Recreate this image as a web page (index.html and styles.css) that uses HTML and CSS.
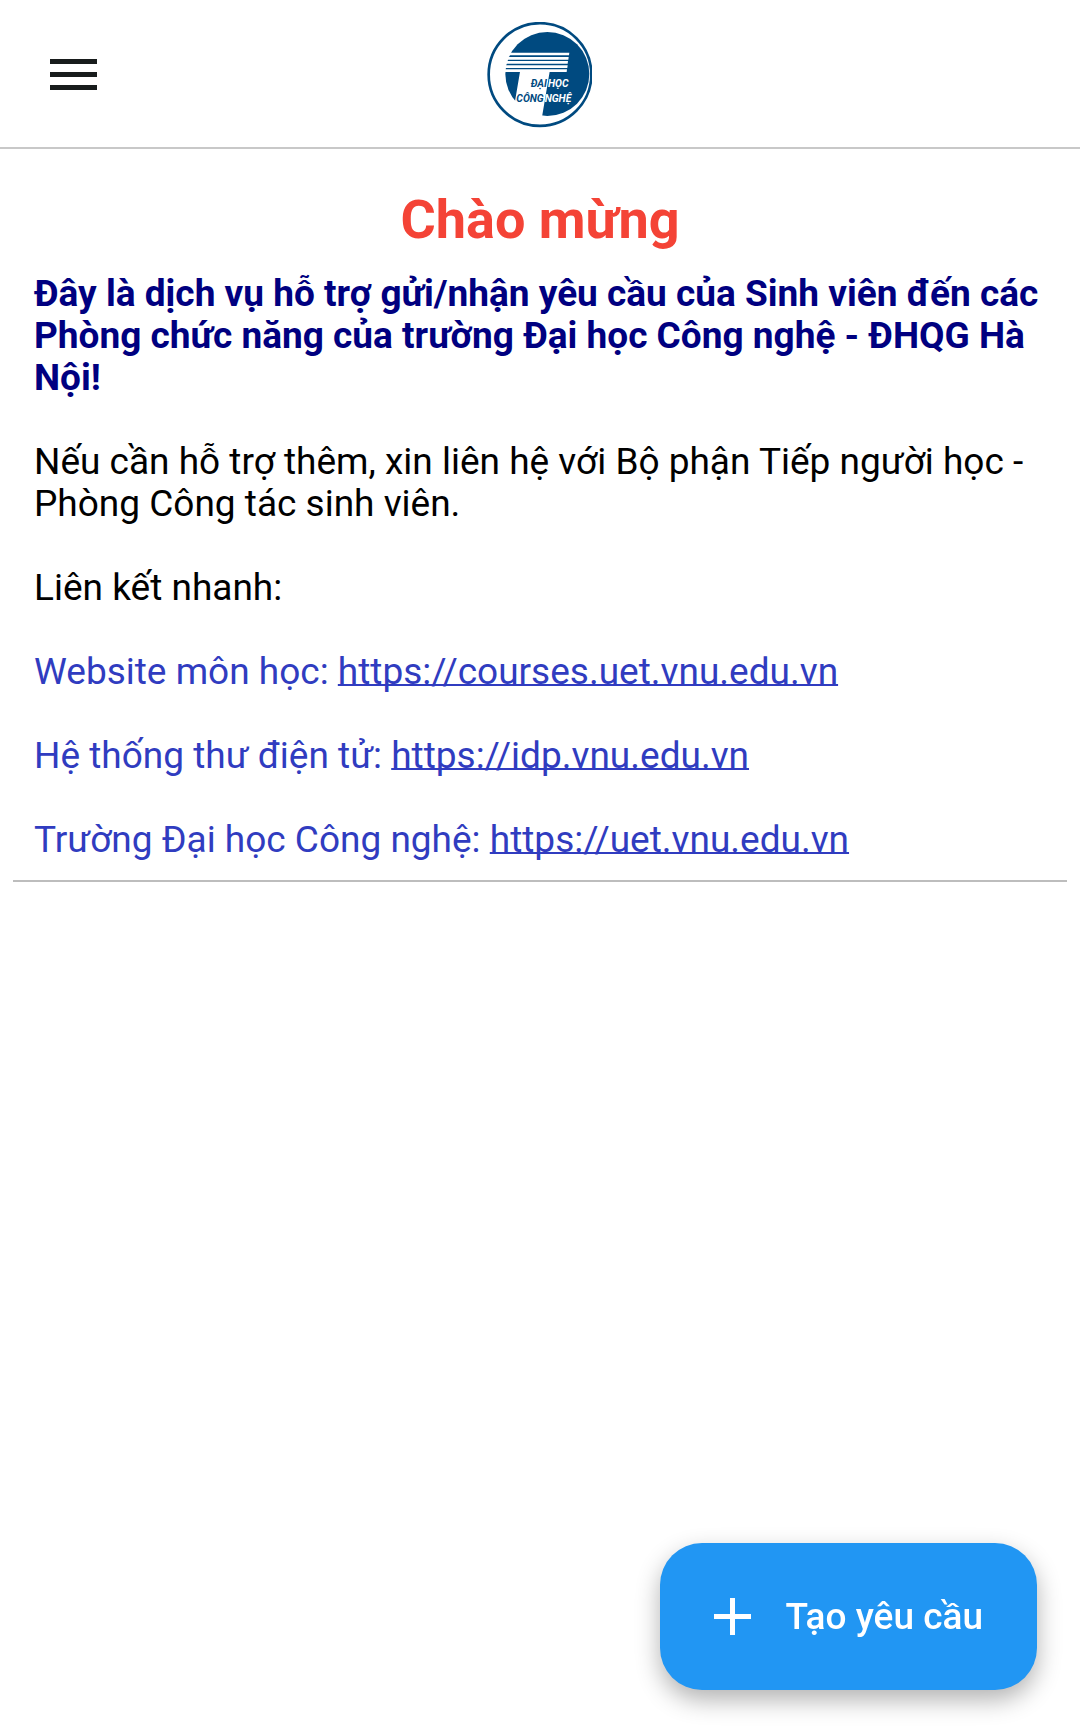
FILE: index.html
```html
<!DOCTYPE html>
<html lang="vi">
<head>
<meta charset="utf-8">
<meta name="viewport" content="width=device-width, initial-scale=1">
<title>Chào mừng</title>
<link rel="stylesheet" href="styles.css">
</head>
<body>
<header class="topbar">
  <button class="menu" type="button" aria-label="Menu">
    <svg viewBox="0 0 47 31" width="47" height="31"><path d="M0 0h47v5H0zM0 13h47v5H0zM0 26h47v5H0z" fill="#181c1c"/></svg>
  </button>
  <svg class="logo" viewBox="21 21 318 318" width="106" height="106" role="img" aria-label="Đại học Công nghệ">
    <defs>
      <clipPath id="disc"><circle cx="202" cy="177" r="129"/></clipPath>
      <clipPath id="edge"><path d="M21 21h315v318H21z"/></clipPath>
    </defs>
    <g clip-path="url(#edge)">
      <circle cx="180" cy="178.500" r="154" fill="#fff" stroke="#004a80" stroke-width="8"/>
      <circle cx="202" cy="177" r="126" fill="#004a80"/>
    </g>
    <path clip-path="url(#disc)" fill="#fff" d="M60 113H268L267 121H60zM60 126H266L265 134H60zM60 138H264L263 146H60zM60 151H263L262 159H60zM60 163H261L260 171H60zM120 170H209L186 306H97z"/>
    <g class="logo-text">
      <text x="152" y="217" fill="#004a80">ĐẠI</text>
      <text x="204" y="217" fill="#fff">HỌC</text>
      <text x="109" y="262" fill="#004a80">CÔNG</text>
      <text x="194" y="262" fill="#fff">NGHỆ</text>
    </g>
  </svg>
</header>
<main class="content">
  <h1 class="title">Chào mừng</h1>
  <div class="card">
    <p class="intro">Đây là dịch vụ hỗ trợ gửi/nhận yêu cầu của Sinh viên đến các Phòng chức năng của trường Đại học Công nghệ - ĐHQG Hà Nội!</p>
    <p>Nếu cần hỗ trợ thêm, xin liên hệ với Bộ phận Tiếp người học - Phòng Công tác sinh viên.</p>
    <p>Liên kết nhanh:</p>
    <p class="link">Website môn học: <a href="https://courses.uet.vnu.edu.vn">https://courses.uet.vnu.edu.vn</a></p>
    <p class="link">Hệ thống thư điện tử: <a href="https://idp.vnu.edu.vn">https://idp.vnu.edu.vn</a></p>
    <p class="link">Trường Đại học Công nghệ: <a href="https://uet.vnu.edu.vn">https://uet.vnu.edu.vn</a></p>
  </div>
</main>
<button class="fab" type="button">
  <svg viewBox="0 0 37 37" width="37" height="37"><path d="M16 0h5v16h16v5H21v16h-5V21H0v-5h16z" fill="#fff"/></svg>
  <span>Tạo yêu cầu</span>
</button>
</body>
</html>
```
FILE: styles.css
```css
* { box-sizing: border-box; }
body {
  margin: 0;
  background: #fff;
  color: #000;
  font-family: Roboto, sans-serif;
  font-size: 37px;
  line-height: 42px;
}
.topbar {
  display: grid;
  grid-template-columns: 1fr auto 1fr;
  align-items: center;
  height: 149px;
  padding: 2px 50px 0;
  border-bottom: 2px solid #c8c8c8;
}
.menu { justify-self: start; padding: 0; border: 0; background: none; }
.menu svg, .logo { display: block; }
.logo-text { font: italic 700 31px "Liberation Sans Narrow", Roboto, sans-serif; }
.content { padding: 35px 13px 0; }
.title {
  margin: 0;
  color: #f44336;
  font-size: 54px;
  line-height: 72px;
  font-weight: 700;
  text-align: center;
}
.card { padding: 17px 21px 19px; border-bottom: 2px solid #bdbdbd; }
.card p { margin: 0 0 42px; }
.card p:last-child { margin: 0; }
.card .intro { color: #000080; font-weight: 700; }
.link, .link a { color: #303cc0; }
.link a {
  text-decoration-thickness: 2px;
  text-underline-offset: 0;
  text-decoration-skip-ink: none;
}
.fab {
  position: fixed;
  right: 43px;
  bottom: 39px;
  display: flex;
  align-items: center;
  gap: 34px;
  height: 147px;
  padding: 0 54px;
  border: 0;
  border-radius: 42px;
  background: #2196f3;
  box-shadow: 0 10px 24px rgba(0,0,0,.3);
  color: #fff;
  font: 500 37px/42px Roboto, sans-serif;
}
```
